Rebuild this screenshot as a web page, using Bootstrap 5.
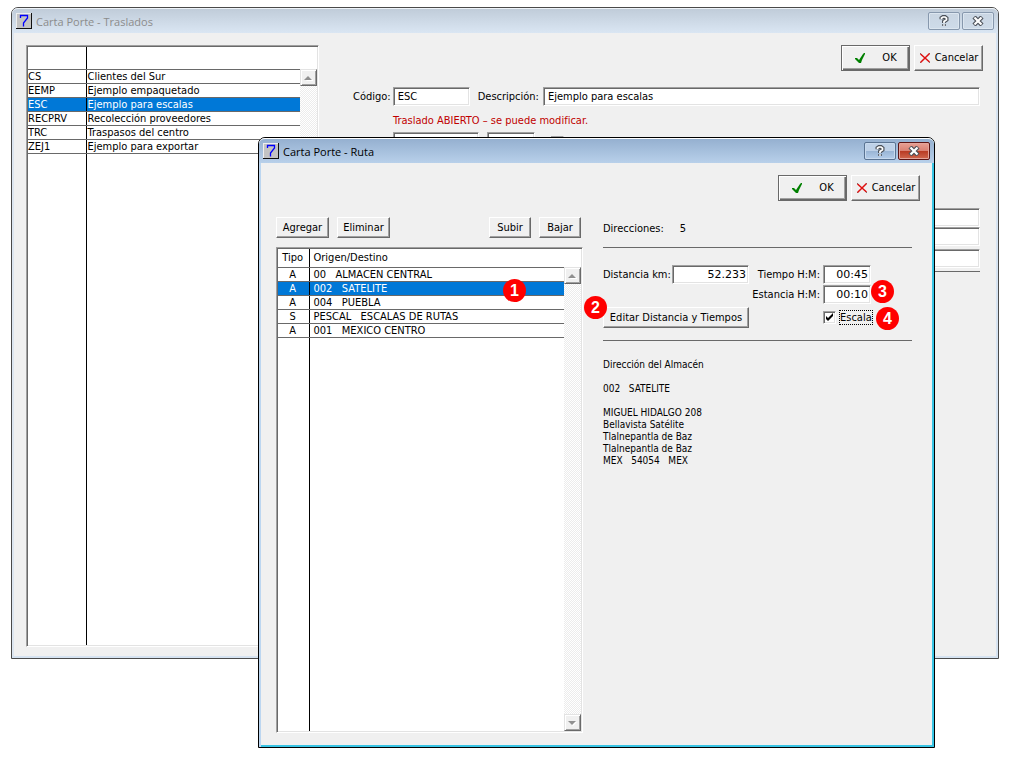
<!DOCTYPE html>
<html lang="es">
<head>
<meta charset="utf-8">
<meta name="viewport" content="width=device-width, initial-scale=1">
<title>Carta Porte</title>
<link href="https://cdn.jsdelivr.net/npm/bootstrap@5.3.0/dist/css/bootstrap.min.css" rel="stylesheet">
<style>
  :root { --face: #f0f0f0; --dark: #696969; --mid: #a0a0a0; --lite: #e3e3e3; --sel: #0078d7; }
  body { font: 11px/14px "DejaVu Sans Condensed", "DejaVu Sans", sans-serif; color: #000; background: #fff; }
  label, button, input { font: inherit; color: inherit; }

  .desktop { padding: 7px 10px 10px 11px; min-height: 100vh; }
  .win { background: var(--face); border: 1px solid #4a4a4a; border-radius: 7px 7px 0 0; }
  .win-title { height: 25px; padding: 0 4px; border-radius: 6px 6px 0 0; color: #8c8c8c;
    background: linear-gradient(#c0ccd9, #dae6f3); border-top: 1px solid #eef3f8; }
  .win-main { box-shadow: inset -2px -2px #d6e3f1, inset 2px 0 #dde6f0; }
  .win-dialog { top: 137px; left: 258px; right: 74px; border-color: #000; box-shadow: inset 2px 0 #bcd6f0, inset -2px -2px #38c4e4; padding-bottom: 2px; }
  .win-dialog .win-title { color: #000; background: linear-gradient(#95b0d0, #b8d0ea); border-top-color: #fff; }
  .win-name { font-family: "Open Sans", sans-serif; font-size: 11px; line-height: 18px; padding-top: 1px; }
  .cap { width: 32px; height: 18px; padding: 0; border: 1px solid #8798ad; border-radius: 2px; background: linear-gradient(#c9d5e2, #cedbe9); box-shadow: inset 0 0 0 1px #dce6f0; }
  .cap-close { margin-left: 2px; }
  .win-dialog .cap { border-color: #5a7392; background: linear-gradient(#bed1e8 50%, #98b4d4 50%, #b4cdea); box-shadow: inset 0 0 0 1px #c8daee; }
  .win-dialog .cap-close { border-color: #5c1414; background: linear-gradient(#e8a094, #d98072 50%, #b83922 50%, #d0674e); box-shadow: inset 0 0 0 1px #e4a59b; }

  .push { background: var(--face); padding: 0; border: 1px solid; border-color: #fff var(--dark) var(--dark) #fff; border-radius: 0;
    box-shadow: inset -1px -1px var(--mid); height: 21px; }
  .push-tall { height: 26px; width: 69px; }
  .push-default { border-color: var(--dark); box-shadow: inset 1px 1px #fff, inset -1px -1px var(--dark), inset -2px -2px var(--mid); }
  .w-agr { width: 53px; } .w-sub { width: 42px; }

  .sunk { background: #fff; border: 1px solid; border-color: var(--mid) #fff #fff var(--mid); border-radius: 0;
    box-shadow: inset 1px 1px var(--dark), inset -1px -1px var(--lite); }
  input.sunk { height: 19px; padding: 0 4px; min-width: 0; }
  input.num { font-family: "DejaVu Sans", sans-serif; text-align: right; padding-right: 2px; }
  .w-code { width: 77px; } .w-date { width: 86px; } .w-hour { width: 48px; } .w-free { width: 500px; }
  .snug { margin-left: 2px; } .apart { margin-top: 3px; }

  .listbox { padding: 1px; }
  .grid-rows { border-collapse: collapse; width: 100%; table-layout: fixed; }
  .grid-rows th, .grid-rows td { font-weight: 400; padding: 0 1px; height: 14px; line-height: 13px; border-bottom: 1px solid var(--dark); white-space: pre; overflow: hidden; }
  .grid-rows th:first-child, .grid-rows td:first-child { border-right: 1px solid #000; padding-left: 0; }
  .grid-rows .on td { background: var(--sel); color: #fff; }
  .grid-rows .rest td { border-bottom: 0; }
  .list-main { flex: 0 0 293px; }
  .list-main th { height: 22px; } .list-main .rest td { height: 492px; } .list-main .c1 { width: 58px; }
  .list-route th { height: 18px; } .list-route .rest td { height: 394px; } .list-route .c1 { width: 31px; }
  .list-route td:first-child, .list-route th:first-child { text-align: center; }
  .list-route td + td, .list-route th + th { padding-left: 4px; }
  .sbar { right: 1px; bottom: 1px; width: 17px; background: repeating-conic-gradient(#fff 0 25%, #ececec 0 50%) 0 0 / 2px 2px; }
  .list-main .sbar { top: 23px; } .list-route .sbar { top: 19px; }
  .sbtn { height: 17px; padding: 0; line-height: 0; background: var(--face); border: 1px solid; border-color: var(--lite) var(--dark) var(--dark) var(--lite); box-shadow: inset 1px 1px #fff, inset -1px -1px var(--mid); }

  .main-body { padding: 12px 15px 11px 14px; }
  .dlg-body { padding: 12px 14px 12px 17px; }
  .main-form { margin: 16px 3px 0 34px; }
  .msg { color: #c00000; margin: 8px 0 4px 40px; }
  .form-stack { margin-top: 57px; }
  .col-list { flex: 0 0 307px; }
  .list-tools { padding-right: 2px; margin-bottom: 9px; }
  .detail { margin: 0 8px 0 20px; }
  .count { margin: 5px 0 11px; }
  .rule { height: 1px; background: var(--dark); }
  .fields { display: grid; grid-template-columns: 146px 68px 48px; column-gap: 3px; row-gap: 1px; margin: 17px 0 12px; white-space: nowrap; }
  .third { margin-top: 2px; }
  .addr { font-size: 10px; line-height: 12px; white-space: pre-line; margin: 18px 0 0; }
  .addr span { white-space: pre; }
  input.tick { appearance: none; width: 13px; height: 13px; margin: 0; flex: none; }
  .tick:checked { background: #fff url("data:image/svg+xml,%3Csvg xmlns='http://www.w3.org/2000/svg' viewBox='0 0 9 9'%3E%3Cpath d='M1 3v3l2 2 5-5V0L3 5z'/%3E%3C/svg%3E") center/9px 9px no-repeat; }
  .focus-text { outline: 1px dotted #000; line-height: 13px; }
  .pin { position: absolute; width: 23px; height: 23px; border-radius: 50%; background: #f00; color: #fff; font: bold 16px/23px "Liberation Sans", sans-serif; text-align: center; }
  .pin-1 { top: 31px; right: 56px; }
  .pin-2 { left: -19px; top: -11px; }
  .pin-3 { left: 48px; top: -5px; }
  .pin-4 { left: 53px; top: 0; }
</style>
</head>
<body>
<svg class="d-none">
  <symbol id="seven" viewBox="0 0 16 16"><path fill="#c3c3c3" d="M0 0h16v16H0z"/><path fill="#eee" d="M0 0h16v1H1v15H0z"/><path fill="#111" d="M15 0h1v16H0v-1h15z"/><path fill="none" stroke="#00f" stroke-width="1.3" d="M4.500 5V2.500h7V5l-4 5v3.500"/></symbol>
  <symbol id="help" viewBox="0 0 10 12"><path fill="none" stroke="#4b5058" stroke-width="4" d="M2.500 4.200V3L4 2h2l1.500 1.200v1.600L5 6.500V8M5 9.200v1.500"/><path fill="none" stroke="#fff" stroke-width="1.700" d="M2.500 4V3L4 2h2l1.500 1.200v1.600L5 6.500V8M5 9.200v1.500"/></symbol>
  <symbol id="shut" viewBox="0 0 12 10"><path fill="none" stroke="#4b5058" stroke-width="4.400" d="M2 1l8 8M10 1L2 9"/><path fill="none" stroke="#fff" stroke-width="2.200" d="M2.500 1.500l7 7M9.500 1.500l-7 7"/></symbol>
  <symbol id="ok" viewBox="0 0 12 12"><path fill="#008000" d="M10 1h1v1l-1 2-2 4-1 3H5L3 9 1 7V6h2l2 2 2-3 2-3z"/></symbol>
  <symbol id="no" viewBox="0 0 12 12"><path fill="none" stroke="#777" d="M1 1l10 10M11 1L1 11"/><path fill="none" stroke="#e01010" stroke-width="1.500" d="M1.500 2l9 8M10.500 1.500l-9 9"/></symbol>
  <symbol id="up" viewBox="0 0 9 6"><path fill="#fff" d="M2 6h7V5L5 2z"/><path fill="#909090" d="M0 5h8L4 1z"/></symbol>
  <symbol id="down" viewBox="0 0 9 6"><path fill="#fff" d="M1 2h8L5 6z"/><path fill="#909090" d="M0 1h8L4 5z"/></symbol>
</svg>

<main class="desktop position-relative">
  <section class="win win-main">
    <header class="win-title d-flex align-items-center">
      <svg width="16" height="16"><use href="#seven"/></svg>
      <span class="win-name ms-1 me-auto">Carta Porte - Traslados</span>
      <button class="cap d-flex align-items-center justify-content-center" aria-label="Ayuda"><svg width="10" height="12"><use href="#help"/></svg></button>
      <button class="cap cap-close d-flex align-items-center justify-content-center" aria-label="Cerrar"><svg width="12" height="10"><use href="#shut"/></svg></button>
    </header>
    <div class="main-body d-flex align-items-start">
      <div class="listbox list-main sunk position-relative">
        <table class="grid-rows">
          <colgroup><col class="c1"><col></colgroup>
          <thead><tr><th></th><th></th></tr></thead>
          <tbody>
            <tr><td>CS</td><td>Clientes del Sur</td></tr>
            <tr><td>EEMP</td><td>Ejemplo empaquetado</td></tr>
            <tr class="on"><td>ESC</td><td>Ejemplo para escalas</td></tr>
            <tr><td>RECPRV</td><td>Recolección proveedores</td></tr>
            <tr><td>TRC</td><td>Traspasos del centro</td></tr>
            <tr><td>ZEJ1</td><td>Ejemplo para exportar</td></tr>
            <tr class="rest"><td></td><td></td></tr>
          </tbody>
        </table>
        <div class="sbar position-absolute d-flex flex-column justify-content-between">
          <button class="sbtn" aria-label="Arriba"><svg width="9" height="6"><use href="#up"/></svg></button>
        </div>
      </div>
      <div class="flex-grow-1">
        <div class="d-flex justify-content-end gap-1">
          <button class="push push-tall push-default d-flex align-items-center justify-content-center"><svg class="me-3" width="12" height="12"><use href="#ok"/></svg>OK</button>
          <button class="push push-tall d-flex align-items-center justify-content-center gap-1"><svg width="12" height="12"><use href="#no"/></svg>Cancelar</button>
        </div>
        <div class="main-form">
          <div class="d-flex align-items-center">
            <label for="cod">Código:</label>
            <input id="cod" class="sunk w-code snug me-2" value="ESC">
            <label for="des">Descripción:</label>
            <input id="des" class="sunk flex-grow-1 ms-1" value="Ejemplo para escalas">
          </div>
          <p class="msg">Traslado ABIERTO – se puede modificar.</p>
          <div class="d-flex msg mt-0 mb-0">
            <input class="sunk w-date me-2" aria-label="Fecha"><input class="sunk w-hour" aria-label="Hora">
            <input class="sunk tick p-0 ms-3 mt-1" type="checkbox" aria-label="Opción">
          </div>
          <div class="form-stack d-flex flex-column align-items-end">
            <input class="sunk w-free" aria-label="Origen"><input class="sunk w-free" aria-label="Destino">
            <input class="sunk w-free apart" aria-label="Comentario">
            <div class="rule w-free apart"></div>
          </div>
        </div>
      </div>
    </div>
  </section>

  <section class="win win-dialog position-absolute" role="dialog" aria-label="Carta Porte - Ruta">
    <header class="win-title d-flex align-items-center">
      <svg width="16" height="16"><use href="#seven"/></svg>
      <span class="win-name ms-1 me-auto">Carta Porte - Ruta</span>
      <button class="cap d-flex align-items-center justify-content-center" aria-label="Ayuda"><svg width="10" height="12"><use href="#help"/></svg></button>
      <button class="cap cap-close d-flex align-items-center justify-content-center" aria-label="Cerrar"><svg width="12" height="10"><use href="#shut"/></svg></button>
    </header>
    <div class="dlg-body">
      <div class="d-flex justify-content-end gap-1 mb-3">
        <button class="push push-tall push-default d-flex align-items-center justify-content-center"><svg class="me-3" width="12" height="12"><use href="#ok"/></svg>OK</button>
        <button class="push push-tall d-flex align-items-center justify-content-center gap-1"><svg width="12" height="12"><use href="#no"/></svg>Cancelar</button>
      </div>
      <div class="d-flex align-items-start">
        <div class="col-list">
          <div class="list-tools d-flex gap-2">
            <button class="push w-agr">Agregar</button>
            <button class="push w-agr me-auto">Eliminar</button>
            <button class="push w-sub">Subir</button>
            <button class="push w-sub">Bajar</button>
          </div>
          <div class="listbox list-route sunk position-relative">
            <table class="grid-rows">
              <colgroup><col class="c1"><col></colgroup>
              <thead><tr><th>Tipo</th><th>Origen/Destino</th></tr></thead>
              <tbody>
                <tr><td>A</td><td>00   ALMACEN CENTRAL</td></tr>
                <tr class="on"><td>A</td><td>002   SATELITE</td></tr>
                <tr><td>A</td><td>004   PUEBLA</td></tr>
                <tr><td>S</td><td>PESCAL   ESCALAS DE RUTAS</td></tr>
                <tr><td>A</td><td>001   MEXICO CENTRO</td></tr>
                <tr class="rest"><td></td><td></td></tr>
              </tbody>
            </table>
            <div class="sbar position-absolute d-flex flex-column justify-content-between">
              <button class="sbtn" aria-label="Arriba"><svg width="9" height="6"><use href="#up"/></svg></button>
              <button class="sbtn" aria-label="Abajo"><svg width="9" height="6"><use href="#down"/></svg></button>
            </div>
            <span class="pin pin-1">1</span>
          </div>
        </div>
        <div class="detail flex-grow-1">
          <div class="count d-flex gap-3"><span>Direcciones:</span><span>5</span></div>
          <div class="rule"></div>
          <div class="fields">
            <div class="d-flex align-items-center justify-content-between"><label for="dist">Distancia km:</label><input id="dist" class="sunk num w-code" value="52.233"></div>
            <label for="tpo" class="text-end align-self-center">Tiempo H:M:</label>
            <input id="tpo" class="sunk num w-hour" value="00:45">
            <span></span>
            <label for="est" class="text-end align-self-center">Estancia H:M:</label>
            <div class="position-relative"><input id="est" class="sunk num w-hour" value="00:10"><span class="pin pin-3">3</span></div>
            <div class="third position-relative"><button class="push w-100">Editar Distancia y Tiempos</button><span class="pin pin-2">2</span></div>
            <span></span>
            <div class="third position-relative d-flex align-items-center gap-1"><input id="esc" class="sunk tick p-0" type="checkbox" checked><label for="esc" class="focus-text">Escala</label><span class="pin pin-4">4</span></div>
          </div>
          <div class="rule"></div>
          <p class="addr">Dirección del Almacén

            <span>002   SATELITE</span>

            MIGUEL HIDALGO 208
            Bellavista Satélite
            Tlalnepantla de Baz
            Tlalnepantla de Baz
            <span>MEX   54054   MEX</span></p>
        </div>
      </div>
    </div>
  </section>
</main>
<script src="https://cdn.jsdelivr.net/npm/bootstrap@5.3.0/dist/js/bootstrap.bundle.min.js"></script>
</body>
</html>
